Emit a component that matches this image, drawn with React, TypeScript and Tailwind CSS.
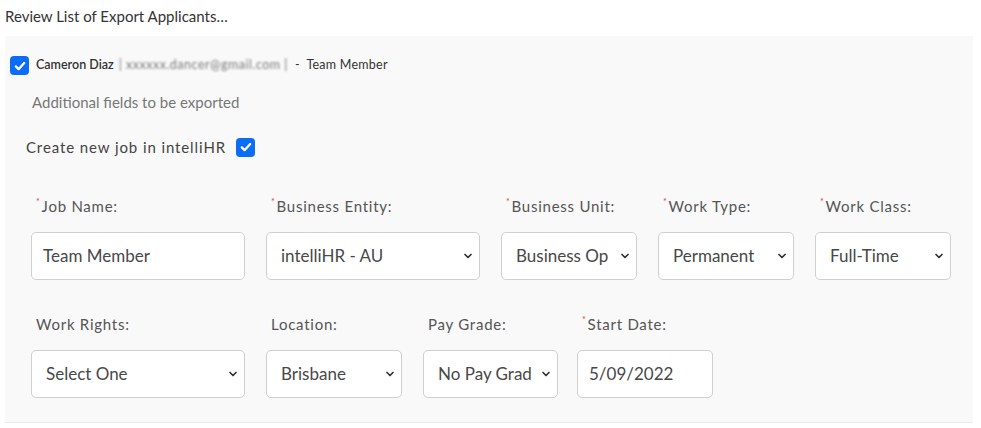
import { ChevronDown } from 'lucide-react';

function Check({ className = '' }: { className?: string }) {
  return (
    <span
      className={`flex h-[19px] w-[19px] shrink-0 items-center justify-center rounded-[4px] bg-[#0b6cf5] ${className}`}
    >
      <svg viewBox="0 0 16 16" className="h-[14px] w-[14px]" fill="none">
        <path d="M3.2 8.4 6.4 11.6 12.8 4.6" stroke="white" strokeWidth="2.6" strokeLinecap="round" strokeLinejoin="round" />
      </svg>
    </span>
  );
}

function Label({ text, required }: { text: string; required?: boolean }) {
  return (
    <div className="mb-[15px] flex h-[20px] items-center pl-[5px] text-[15px] tracking-[0.05em] text-[#555]">
      {required && <span className="-mt-[10px] mr-[1px] text-[9px] leading-none text-[#e53935]">*</span>}
      {text}
    </div>
  );
}

function TextField({ label, value, width, required }: { label: string; value: string; width: string; required?: boolean }) {
  return (
    <div className={width}>
      <Label text={label} required={required} />
      <div className="flex h-[48px] items-center rounded-[5px] border border-[#cfcfcf] bg-white pl-[11px] text-[17px] text-[#484848]">
        {value}
      </div>
    </div>
  );
}

function SelectField({ label, value, width, required }: { label: string; value: string; width: string; required?: boolean }) {
  return (
    <div className={width}>
      <Label text={label} required={required} />
      <div className="flex h-[48px] items-center rounded-[5px] border border-[#cfcfcf] bg-white pl-[14px] pr-[5px] text-[17px] text-[#484848]">
        <span className="flex-1 whitespace-nowrap">{value}</span>
        <ChevronDown size={12} strokeWidth={3.4} className="ml-[4px] shrink-0 text-[#333]" />
      </div>
    </div>
  );
}

export default function App() {
  return (
    <div className="h-[428px] w-[981px] bg-white font-['Lato',sans-serif]">
      <div className="h-[36px] pl-[5px] pt-[6px] text-[15px] leading-[20px] text-[#333]">
        Review List of Export Applicants…
      </div>

      <div className="ml-[5px] h-[387px] w-[968px] border-b border-[#ececec] bg-[#f9f9f9]">
        <div className="flex items-center pl-[5px] pt-[20px] text-[12.5px] text-[#333]">
          <Check />
          <span className="ml-[7px] font-semibold">Cameron Diaz</span>
          <span className="ml-[5px] select-none tracking-[0.04em] text-[#7a7a7a] blur-[1.2px]">| xxxxxx.dancer@gmail.com |</span>
          <span className="ml-[7px] tracking-[0.02em]">-&nbsp; Team Member</span>
        </div>

        <div className="pl-[27px] pt-[17px] text-[15px] leading-[20px] text-[#777]">
          Additional fields to be exported
        </div>

        <div className="flex items-center pl-[21px] pt-[24px] text-[15px] tracking-[0.06em] text-[#444]">
          Create new job in intelliHR
          <Check className="ml-[10px]" />
        </div>

        <div className="flex gap-[21px] pl-[26px] pt-[38px]">
          <TextField label="Job Name:" value="Team Member" width="w-[214px]" required />
          <SelectField label="Business Entity:" value="intelliHR - AU" width="w-[214px]" required />
          <SelectField label="Business Unit:" value="Business Op" width="w-[136px]" required />
          <SelectField label="Work Type:" value="Permanent" width="w-[136px]" required />
          <SelectField label="Work Class:" value="Full-Time" width="w-[136px]" required />
        </div>

        <div className="flex gap-[21px] pl-[26px] pt-[35px]">
          <SelectField label="Work Rights:" value="Select One" width="w-[214px]" />
          <SelectField label="Location:" value="Brisbane" width="w-[136px]" />
          <SelectField label="Pay Grade:" value="No Pay Grad" width="w-[135px]" />
          <div className="-ml-[2px]">
            <TextField label="Start Date:" value="5/09/2022" width="w-[136px]" required />
          </div>
        </div>
      </div>
    </div>
  );
}
